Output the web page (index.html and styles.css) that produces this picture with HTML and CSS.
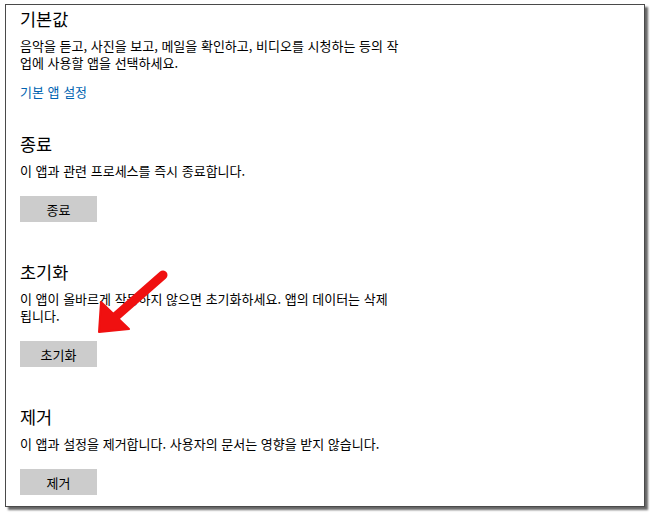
FILE: index.html
```html
<!DOCTYPE html>
<html lang="ko">
<head>
<meta charset="utf-8">
<title>앱 설정</title>
<link rel="stylesheet" href="styles.css">
</head>
<body>
<div class="window">
  <section class="sec sec-first">
    <h2 class="title">기본값</h2>
    <p class="desc">음악을 듣고, 사진을 보고, 메일을 확인하고, 비디오를 시청하는 등의 작업에 사용할 앱을 선택하세요.</p>
    <a class="link" href="#">기본 앱 설정</a>
  </section>
  <section class="sec">
    <h2 class="title">종료</h2>
    <p class="desc">이 앱과 관련 프로세스를 즉시 종료합니다.</p>
    <button class="btn">종료</button>
  </section>
  <section class="sec">
    <h2 class="title">초기화</h2>
    <p class="desc">이 앱이 올바르게 작동하지 않으면 초기화하세요. 앱의 데이터는 삭제됩니다.</p>
    <button class="btn">초기화</button>
  </section>
  <section class="sec">
    <h2 class="title">제거</h2>
    <p class="desc">이 앱과 설정을 제거합니다. 사용자의 문서는 영향을 받지 않습니다.</p>
    <button class="btn">제거</button>
  </section>
</div>
<svg class="arrow" width="650" height="513" viewBox="0 0 650 513" aria-hidden="true">
  <line x1="163" y1="275" x2="114" y2="318" stroke="#f01010" stroke-width="9" stroke-linecap="round"/>
  <polygon points="99,332 101,302 129,329" fill="#f01010" stroke="#f01010" stroke-width="2" stroke-linejoin="round"/>
</svg>
</body>
</html>
```

FILE: styles.css
```css
html, body {
  margin: 0;
  padding: 0;
  background: #ffffff;
}
body {
  position: relative;
  width: 650px;
  height: 513px;
  overflow: hidden;
  font-family: "Noto Sans CJK KR", "Noto Sans", sans-serif;
  color: #000;
}
.window {
  box-sizing: border-box;
  margin: 4px 0 0 5px;
  width: 640px;
  height: 503px;
  border: 1px solid #4a4a4a;
  box-shadow: 3px 3px 2px rgba(0, 0, 0, 0.6);
  padding: 2px 14px 0 14px;
  background: #fff;
}
.sec {
  display: flex;
  flex-direction: column;
  align-items: flex-start;
  margin-bottom: 38px;
}
.sec-first {
  margin-bottom: 32px;
}
.title {
  margin: 0;
  font-size: 17.5px;
  font-weight: 400;
  line-height: 24px;
}
.desc {
  margin: 6px 0 0 0;
  max-width: 379px;
  font-size: 13px;
  line-height: 17px;
}
.link {
  margin-top: 12px;
  font-size: 13px;
  line-height: 17px;
  color: #0063b1;
  text-decoration: none;
}
.btn {
  margin-top: 17px;
  width: 77px;
  height: 26px;
  border: none;
  background: #cccccc;
  font-family: inherit;
  font-size: 13px;
  color: #000;
  padding: 0;
}
.arrow {
  position: absolute;
  left: 0;
  top: 0;
  pointer-events: none;
}
```
